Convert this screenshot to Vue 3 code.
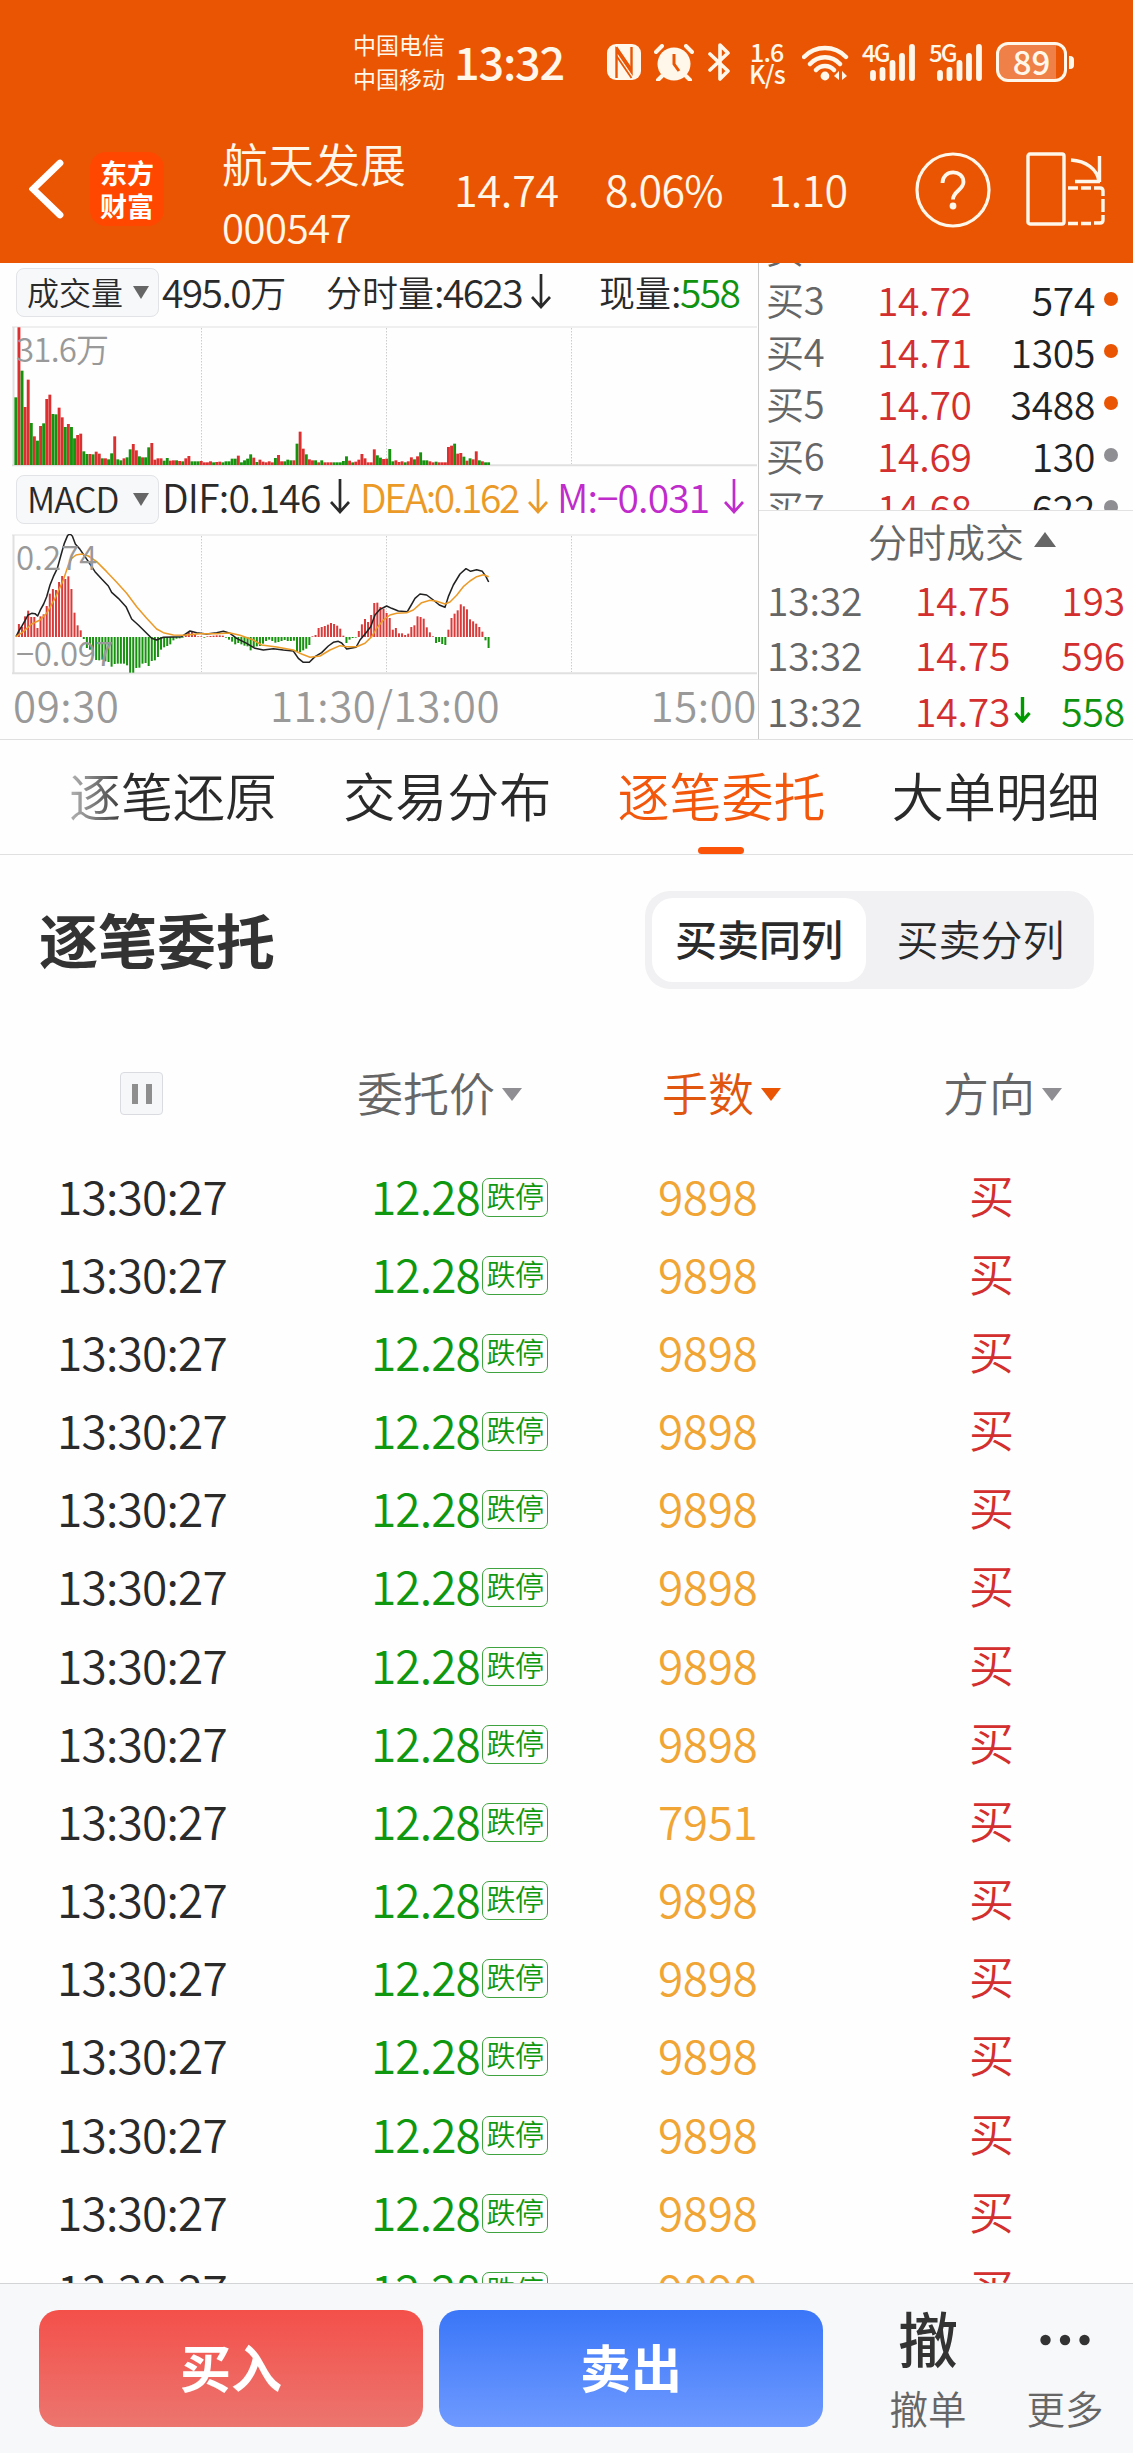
<template>
  <div class="page">
    <header class="top">
      <div class="status">
        <div class="carriers">
          <div>中国电信</div>
          <div>中国移动</div>
        </div>
        <div class="clock">13:32</div>
        <svg class="s-nfc" width="34" height="36" viewBox="0 0 34 36">
          <rect width="34" height="36" rx="9" fill="#fff8ea" />
          <path d="M9.500 34V6l15 22V3" fill="none" stroke="#ea5504" stroke-width="2.400" />
          <path d="M9.500 3l15 22M9.500 12l15 22" fill="none" stroke="#ea5504" stroke-width="1.800" />
        </svg>
        <svg class="s-alarm" width="40" height="37" viewBox="0 0 40 37">
          <circle cx="20" cy="20" r="16.5" fill="#fff8ea" />
          <path d="M2 8l6-6M38 8l-6-6M8 32l-4 4M32 32l4 4" stroke="#fff8ea" stroke-width="4" stroke-linecap="round" />
          <path d="M20 10v10l5 7" fill="none" stroke="#ea5504" stroke-width="3" />
        </svg>
        <svg class="s-bt" width="24" height="38" viewBox="0 0 24 38">
          <path d="M2 11l18 17-8 8V2l8 8L2 27" fill="none" stroke="#fff8ea" stroke-width="3.6" stroke-linejoin="round" stroke-linecap="round" />
        </svg>
        <div class="speed">
          <div>1.6</div>
          <div>K/s</div>
        </div>
        <svg class="s-wifi" width="48" height="37" viewBox="0 0 48 37">
          <path d="M2 13a29 29 0 0 1 42 0M8 20a20 20 0 0 1 30 0M14 26a12 12 0 0 1 18 0" fill="none" stroke="#fff8ea" stroke-width="4.4" stroke-linecap="round" />
          <circle cx="23" cy="32" r="4.4" fill="#fff8ea" />
          <path d="M37 27v9l-5-4zM40 27v9l5-4z" fill="#fff8ea" />
        </svg>
        <div v-for="net in ['4G', '5G']" :key="net" class="signal">
          <span>{{ net }}</span>
          <svg width="48" height="37" viewBox="0 0 48 37">
            <path d="M4 29v5M13.5 26v8M23.5 19v15M33 12v22M43 3v31" stroke="#fff8ea" stroke-width="5.8" stroke-linecap="round" />
          </svg>
        </div>
        <div class="battery"><span>89</span></div>
        <i class="nub"></i>
      </div>

      <div class="titlebar">
        <svg class="back" width="36" height="60" viewBox="0 0 36 60">
          <path d="M31 4L4 30l27 26" fill="none" stroke="#fff" stroke-width="6.8" stroke-linecap="round" />
        </svg>
        <div class="logo"><div>东方</div><div>财富</div></div>
        <div class="stock">
          <div class="name">航天发展</div>
          <div class="code">000547</div>
        </div>
        <div class="quote q1">14.74</div>
        <div class="quote q2">8.06%</div>
        <div class="quote q3">1.10</div>
        <svg class="help" width="76" height="76" viewBox="0 0 76 76" fill="none" stroke="#fff8ea">
          <circle cx="38" cy="38" r="36" stroke-width="3.2" />
          <path d="M27.500 31c0-14 21-14 21-1 0 8-10.500 9-10.500 17.500" stroke-width="3.800" />
          <circle cx="38" cy="54" r="3.400" fill="#fff8ea" stroke="none" />
        </svg>
        <svg class="rotate" width="80" height="74" viewBox="0 0 80 74" fill="none" stroke="#fff8ea" stroke-width="3.400">
          <rect x="2" y="2" width="36" height="70" rx="2" />
          <path d="M45 8c15 1 26 9 28 21M73.500 4v26M49 29.500h25" />
          <path d="M42 36h10M55 36h10M68 36h6q3 0 3 3v5M77 47v13M77 63v5q0 3-3 3h-6M65 71.500H55M52 71.500H42" />
        </svg>
      </div>
    </header>

    <section class="market">
      <div class="charts">
        <div class="ind">
          <div class="chip">成交量<i class="tri"></i></div>
          <div class="cell v1"><b>495.0</b>万</div>
          <div class="cell v2">分时量<b>:4623</b><Arrow /></div>
          <div class="cell v3">现量<b>:<em class="green">558</em></b></div>
        </div>
        <div class="plot">
          <svg width="747" height="141" viewBox="0 0 747 141">
            <path class="frame" d="M1.500 1v139" stroke-width="2" />
            <path class="frame" d="M0 1h745" stroke-width="1" />
            <path class="frame" d="M0 139.300h745" stroke-width="2" />
            <path class="dots" d="M189.500 2v136M374.500 2v136M559.500 2v136" />
            <rect
              v-for="(b, i) in volume"
              :key="i"
              :x="2.4 + i * 3.09"
              :y="139 - b.h"
              width="2.900"
              :height="b.h"
              :fill="b.up ? '#dc2f2f' : '#17920f'"
            />
          </svg>
          <span class="label vol">31.6<small>万</small></span>
        </div>
        <div class="ind macd">
          <div class="chip">MACD<i class="tri"></i></div>
          <div class="cell m1"><b>DIF:0.146</b><Arrow /></div>
          <div class="cell m2"><b>DEA:0.162</b><Arrow /></div>
          <div class="cell m3"><b>M:−0.031</b><Arrow /></div>
        </div>
        <div class="plot">
          <svg width="747" height="141" viewBox="0 0 747 141">
            <path class="frame" d="M1.500 1v139" stroke-width="2" />
            <path class="frame" d="M0 1h745" stroke-width="1" />
            <path class="frame" d="M0 139.300h745" stroke-width="2" />
            <path class="dots" d="M189.500 2v136M374.500 2v136M559.500 2v136" />
            <rect
              v-for="(v, i) in macd"
              :key="i"
              :x="5.9 + i * 3.09"
              :y="v > 0 ? 103 - v / 3 : 103"
              width="2"
              :height="Math.abs(v) / 3"
              :fill="v > 0 ? '#d93a3a' : '#17920f'"
            />
            <g transform="scale(.33333) translate(-36 -102)" fill="none" stroke-width="4.600" stroke-linejoin="round">
              <polyline :points="dif" stroke="#222" />
              <polyline :points="dea" stroke="#eb9a28" />
            </g>
          </svg>
          <span class="label">0.274</span>
          <span class="label low">−0.097</span>
        </div>
        <div class="axis">
          <span>09:30</span><span>11:30/13:00</span><span>15:00</span>
        </div>
      </div>

      <div class="side">
        <div class="bids">
          <div v-for="b in bids" :key="b.level" class="bid">
            <span class="lv">买<b>{{ b.level }}</b></span>
            <span class="red">{{ b.price }}</span>
            <span class="qty">{{ b.qty }}</span>
            <i class="dot" :class="{ gray: !b.hot }"></i>
          </div>
        </div>
        <div class="ticks">
          <div class="ticks-title">分时成交<i class="tri-up"></i></div>
          <div v-for="(t, i) in ticks" :key="i" class="tick">
            <span>{{ t.time }}</span>
            <span class="red">{{ t.price }}</span>
            <svg width="17" height="27" viewBox="0 0 17 27">
              <path v-if="t.down" d="M8.500 1v23M1.500 17l7 8 7-8" fill="none" stroke="#009a00" stroke-width="3.400" />
            </svg>
            <span class="tq" :class="t.down ? 'green' : 'red'">{{ t.qty }}</span>
          </div>
        </div>
      </div>
    </section>

    <nav class="tabs">
      <div
        v-for="t in tabs"
        :key="t"
        class="tab"
        :class="{ active: t === activeTab }"
        @click="activeTab = t"
      >
        {{ t }}
      </div>
    </nav>

    <main class="orders">
      <div class="orders-head">
        <h2>逐笔委托</h2>
        <div class="segment">
          <div
            v-for="m in modes"
            :key="m"
            :class="{ on: m === mode }"
            @click="mode = m"
          >{{ m }}</div>
        </div>
      </div>

      <div class="row cols">
        <span><i class="pause"></i></span>
        <span>委托价<i class="tri"></i></span>
        <span class="sorted">手数<i class="tri"></i></span>
        <span>方向<i class="tri"></i></span>
      </div>
      <div v-for="(lots, i) in orders" :key="i" class="row">
        <span class="time">13:30:27</span>
        <span class="price">12.28<i class="tag">跌停</i></span>
        <span class="lots">{{ lots }}</span>
        <span class="dir">买</span>
      </div>
    </main>

    <footer class="actions">
      <button class="buy">买入</button>
      <button class="sell">卖出</button>
      <div class="act cancel">
        <strong>撤</strong>
        <span>撤单</span>
      </div>
      <div class="act more">
        <svg width="50" height="58" viewBox="0 0 50 58" fill="#333">
          <circle cx="5.500" cy="29" r="5.200" />
          <circle cx="25" cy="29" r="5.200" />
          <circle cx="44.500" cy="29" r="5.200" />
        </svg>
        <span>更多</span>
      </div>
    </footer>
  </div>
</template>

<script setup>
import { ref, h } from 'vue';

// 向下箭头，颜色跟随文字
const Arrow = () =>
  h('svg', { class: 'arrow', width: 20, height: 35, viewBox: '0 0 20 35' }, [
    h('path', { d: 'M10 0v33M1 23l9 10 9-10', fill: 'none', stroke: 'currentColor', 'stroke-width': 2.7 })
  ]);

// 成交量柱：高度 + 颜色 (r 涨 / g 跌)
const volumeText =
  'g203 r413 g283 r174 r256 g126 r86 g73 r117 g125 r198 r211 g153 g152 r172 r143 g114 r123 g114 g80 ' +
  'r90 r94 g41 g33 r33 g32 r40 r34 g20 r20 g17 g35 r86 g17 g14 r20 g23 g47 r63 r44 ' +
  'g26 r23 g23 g53 r66 r16 r20 r20 g13 g21 r13 r14 g14 r12 g11 r20 r27 g11 g11 g11 ' +
  'r12 r8 r8 r11 g8 r9 r10 g8 g11 g11 g19 g19 r28 g8 g14 g19 g32 r22 g9 r16 ' +
  'r10 r8 r11 r8 g21 r30 r11 g11 g16 g14 r14 g64 r100 r49 g32 r17 r14 g14 r8 g14 ' +
  'r8 r8 r8 g8 g8 g8 g12 g26 r13 g8 r10 r16 r33 r20 r8 r8 r47 g29 g22 r18 ' +
  'r19 g48 g11 r14 r9 r11 g8 r11 r23 g17 r26 g38 g14 g14 r11 r8 g10 r8 r8 r8 ' +
  'r54 r58 g64 r34 r36 g25 r13 g20 r17 r41 g14 r11 g8 g8';
const volume = volumeText.split(' ').map(s => ({ up: s[0] === 'r', h: Number(s.slice(1)) / 3 }));

const macd = [
  39, 30, 62, 79, 60, 60, 27, 62, 68, 93, 130, 144, 141, 165, 183, 174, 182, 144, 73, 35, 20,
  -6, -33, -38, -57, -69, -70, -68, -73, -75, -89, -81, -80, -80, -80, -85, -107, -107, -93, -92,
  -80, -78, -87, -72, -70, -60, -38, -31, -27, -22, -10, -5, -4, -2, 6, 14, 15, 8, 2, 2, -2, 2, 3,
  4, 5, 5, 4, -2, -8, -14, -22, -18, -22, -26, -28, -40, -30, -28, -27, -20, -12, -8, -12, -17,
  -15, -12, -9, -12, -12, -11, -45, -45, -40, -35, -24, 2, 6, 27, 30, 33, 37, 42, 39, 34, 25, 4,
  -18, -8, -3, -2, 18, 38, 54, 45, 66, 102, 103, 90, 85, 72, 57, 22, 27, 11, 11, 6, 10, 30, 35,
  62, 60, 55, 29, 14, 2, -18, -15, -21, -24, 22, 57, 70, 80, 98, 92, 83, 53, 47, 40, 30, 16, -10, -33
];

const dif =
  '48,410 57,392 66,378 75,362 84,345 95,340 105,341 113,348 122,328 131,312 140,290 150,255 160,230 ' +
  '172,205 183,165 193,130 203,106 210,102 217,108 226,132 240,148 255,170 270,192 285,215 305,237 ' +
  '325,258 335,277 355,295 378,320 395,357 415,375 440,400 455,415 470,420 490,412 520,411 545,410 ' +
  '570,393 590,398 620,402 650,398 670,394 690,400 710,415 740,430 765,445 790,450 820,446 850,450 ' +
  '880,453 895,475 910,487 928,487 945,470 965,458 985,438 1000,427 1015,424 1025,429 1040,447 ' +
  '1068,442 1080,420 1100,396 1112,380 1125,345 1140,328 1160,318 1175,325 1195,333 1222,335 ' +
  '1232,318 1245,295 1260,282 1280,285 1300,300 1318,315 1335,322 1345,290 1360,255 1380,222 ' +
  '1398,206 1412,214 1430,209 1447,214 1458,230 1466,246';
const dea =
  '48,410 70,395 95,372 120,360 140,340 165,295 190,240 205,195 215,175 228,165 245,162 265,168 ' +
  '290,185 320,215 350,247 380,280 410,320 440,355 470,387 490,398 520,405 550,406 600,401 650,401 ' +
  '690,399 720,406 760,420 785,435 830,441 880,450 905,462 930,472 960,468 990,450 1020,437 ' +
  '1040,440 1070,440 1095,430 1115,410 1130,385 1150,360 1170,345 1190,340 1220,338 1240,330 ' +
  '1265,308 1290,301 1310,304 1335,312 1350,306 1370,286 1390,260 1410,243 1430,230 1450,224 1466,230';

const bids = [
  { level: 2, price: '', qty: '', hot: false },
  { level: 3, price: '14.72', qty: 574, hot: true },
  { level: 4, price: '14.71', qty: 1305, hot: true },
  { level: 5, price: '14.70', qty: 3488, hot: true },
  { level: 6, price: '14.69', qty: 130, hot: false },
  { level: 7, price: '14.68', qty: 622, hot: false }
];

const ticks = [
  { time: '13:32', price: '14.75', qty: 193 },
  { time: '13:32', price: '14.75', qty: 596 },
  { time: '13:32', price: '14.73', qty: 558, down: true }
];

const tabs = ['逐笔还原', '交易分布', '逐笔委托', '大单明细'];
const activeTab = ref('逐笔委托');

const modes = ['买卖同列', '买卖分列'];
const mode = ref('买卖同列');

const orders = Array.from({ length: 15 }, (_, i) => (i === 8 ? 7951 : 9898));
</script>

<style>
body {
  background: #fff;
}
</style>

<style scoped>
.page {
  width: 1133px;
  height: 2453px;
  overflow: hidden;
  display: flex;
  flex-direction: column;
  font-family: "Noto Sans CJK SC", sans-serif;
  font-weight: 350;
  color: #2a2a2a;
  background: #fefefe;
}
.page * { box-sizing: border-box; }
svg { display: block; flex: none; }
b, em, i, small { font-weight: inherit; font-style: normal; }
.red { color: #d32f2f; }
.green { color: #0f930f; }

/* 顶部 */
.top { height: 263px; flex: none; background: #ea5504; color: #fff8ea; }
.status { display: flex; align-items: center; height: 124px; padding-left: 353px; white-space: nowrap; }
.carriers { width: 101px; font-size: 23px; line-height: 34px; margin-top: -2px; font-weight: 400; }
.clock { width: 153px; font-size: 45px; line-height: 50px; letter-spacing: -1.2px; font-weight: 500; margin-top: -3px; }
.s-alarm { margin-left: 13px; }
.s-bt { margin-left: 14px; }
.speed { width: 52px; margin-left: 17px; font-size: 25px; line-height: 22px; letter-spacing: -.8px; font-weight: 500; margin-top: -1px; }
.speed div:first-child { padding-left: 1px; }
.s-wifi { margin-left: 1px; }
.signal { position: relative; width: 67px; padding-left: 19px; }
.signal span { position: absolute; left: 12px; top: -8px; font-size: 24px; line-height: 32px; letter-spacing: -2px; font-weight: 500; }
.battery {
  width: 71px; height: 40px; margin-left: 12px; border: 3px solid #fff8ea; border-radius: 12px;
  background: linear-gradient(90deg, #ef8048 88%, #ea5504 88%);
  display: flex; align-items: center; justify-content: center;
  font-size: 33px; line-height: 34px; font-weight: 500;
}
.battery span { margin-top: -3px; }
.nub { width: 5px; height: 13px; margin-left: 2px; border-radius: 0 4px 4px 0; background: #fff8ea; }

.titlebar { display: flex; align-items: flex-start; height: 139px; white-space: nowrap; }
.back { margin: 35px 0 0 29px; }
.logo {
  width: 74px; height: 74px; margin: 28px 0 0 25px; padding-top: 4px; border-radius: 16px; background: #ff4700;
  text-align: center; color: #fff; font-size: 27px; font-weight: 700; line-height: 33px;
}
.stock { width: 232px; margin: 11px 0 0 58px; }
.name { font-size: 46px; line-height: 54px; }
.code { font-size: 40px; line-height: 46px; letter-spacing: -.4px; margin-top: 14px; }
.quote { font-size: 43px; line-height: 60px; margin-top: 34px; letter-spacing: -.2px; }
.q1 { width: 151px; }
.q2 { width: 163px; letter-spacing: -.8px; }
.q3 { width: 147px; letter-spacing: -.8px; }
.help { margin-top: 28px; }
.rotate { margin: 28px 0 0 35px; }

/* 行情图 */
.market { display: flex; height: 477px; flex: none; border-bottom: 1.500px solid #dfdfdf; }
.charts { width: 759px; border-right: 1px solid #c9c9c9; padding-top: 5px; }
.ind { display: flex; height: 58px; padding-left: 16px; white-space: nowrap; font-size: 36px; }
.macd { margin-top: 8px; height: 59px; }
.chip {
  width: 143px; height: 49px; flex: none; padding: 0 9px 4px 10px; display: flex; align-items: center; justify-content: space-between;
  background: #f7f8fa; border: 1px solid #e2e3e6; border-radius: 8px; font-size: 32px; line-height: 38px;
}
.tri { display: inline-block; border: 8px solid transparent; border-top: 13px solid #666; border-bottom: 0; }
.chip .tri { margin-top: 4px; }
.macd .chip { font-size: 35px; letter-spacing: -.8px; }
.cell { display: flex; align-items: center; height: 46px; flex: none; }
.macd .cell { height: 43px; }
.cell b { font-size: 39px; letter-spacing: -1.600px; margin-top: -1px; }
.macd .m1 b { letter-spacing: -.800px; }
.macd .m2 b { letter-spacing: -2.400px; }
.macd .m3 b { letter-spacing: -.900px; }
.arrow { margin-left: 9px; }
.m1 .arrow { margin-left: 9px; }
.m2 .arrow { margin-left: 10px; }
.m3 .arrow { margin-left: 15px; }
.v1 { width: 167px; padding-left: 3px; }
.v2 { width: 273px; }
.m1 { width: 201px; padding-left: 3px; }
.m2 { width: 197px; color: #eb9a28; }
.m3 { color: #c02bcb; }
.plot { position: relative; height: 141px; padding-left: 12px; }
.frame { stroke: #e0e0e0; fill: none; }
.dots { stroke: #ccc; stroke-width: 1; stroke-dasharray: 1.500 1.500; fill: none; }
.label { position: absolute; left: 16px; top: 5px; font-size: 33px; line-height: 34px; color: #999; }
.label small { font-size: 33px; }
.vol { letter-spacing: -.8px; }
.low { top: 101px; letter-spacing: -.4px; }
.axis { display: flex; justify-content: space-between; padding: 4px 1px 0 13px; font-size: 42px; line-height: 50px; letter-spacing: .6px; color: #999; }

.side { flex: 1; min-width: 0; color: #666; font-size: 39px; white-space: nowrap; }
.bids { height: 248px; overflow: hidden; border-bottom: 1px solid #e2e2e2; }
.bid { display: flex; align-items: center; height: 52px; padding-left: 7px; letter-spacing: -.3px; }
.bid:first-child { margin-top: -40px; }
.bid span { line-height: 52px; margin-top: -4px; }
.bid .lv { width: 111px; font-size: 38px; }
.lv b { font-size: 38px; }
.qty { margin-left: auto; color: #222; }
.dot { width: 14px; height: 14px; margin: -4px 15px 0 9px; border-radius: 50%; background: #ea5504; }
.gray { background: #8e8e93; }
.ticks-title { display: flex; align-items: center; height: 60px; padding-left: 109px; font-size: 39px; line-height: 58px; padding-bottom: 2px; }
.tri-up { border: 11.500px solid transparent; border-bottom: 15px solid #666; border-top: 0; margin: -2px 0 0 10px; }
.tick { display: flex; align-items: center; height: 55.600px; padding: 0 8px 0 8px; letter-spacing: -.2px; }
.tick span { margin-top: 0; }
.tick .red:nth-child(2) { width: 99px; margin-left: auto; }
.tick .tq { width: 94px; text-align: right; }

/* 标签栏 */
.tabs { display: flex; height: 115px; flex: none; padding-left: 36px; border-bottom: 1px solid #e0e0e0; }
.tab { position: relative; width: 274.200px; text-align: center; font-size: 52px; line-height: 110px; white-space: nowrap; flex: none; }
.tab:first-child { color: transparent; background: linear-gradient(90deg, #aaa 14%, #2a2a2a 34%); background-clip: text; -webkit-background-clip: text; }
.active { color: #f3570c; }
.active::after { content: ""; position: absolute; left: 50%; bottom: 0; width: 46px; height: 7px; margin-left: -23px; border-radius: 4px; background: #fb5408; }

/* 委托列表 */
.orders { height: 1428px; flex: none; overflow: hidden; }
.orders-head { display: flex; justify-content: space-between; align-items: center; height: 98px; margin: 36px 39px 0 39px; }
h2 { margin: -2px 0 0; font-size: 59px; line-height: 80px; font-weight: 700; color: #333; }
.segment { display: flex; width: 449px; height: 98px; padding: 7px; border-radius: 25px; background: #f1f1f3; font-size: 42px; line-height: 80px; text-align: center; }
.segment div { width: 214px; height: 84px; border-radius: 21px; flex: none; }
.segment div + div { width: 221px; padding-left: 8px; }
.segment .on { background: #fff; font-weight: 500; }
.row { display: grid; grid-template-columns: 314px 287px 311px 1fr; align-items: center; height: 78.180px; padding-left: 57px; font-size: 46px; line-height: 72px; padding-bottom: 5px; white-space: nowrap; }
.cols { height: 90px; margin: 60px 0 19px; color: #666; font-size: 46px; padding-bottom: 6px; }
.cols .tri { border-width: 13px 10px 0; border-top-color: #8e8e93; margin-left: 7px; vertical-align: 10px; }
.cols span:nth-child(2) { margin-left: -14px; }
.cols span:nth-child(3) { margin-left: 4px; }
.cols span:nth-child(4) { margin-left: -26px; }
.sorted { color: #e0560f; }
.cols .sorted .tri { border-top-color: #ea5504; }
.pause {
  display: block; width: 43px; height: 43px; margin: 5px 0 0 63px; border: 1px solid #d9dbe0; border-radius: 4px;
  background: linear-gradient(#8e8e8e, #8e8e8e) 11px 50% / 6px 20px no-repeat, linear-gradient(#8e8e8e, #8e8e8e) 25px 50% / 6px 20px no-repeat, #f6f7f9;
}
.time { letter-spacing: -.8px; }
.price { display: flex; align-items: center; color: #0f980f; letter-spacing: -.9px; }
.tag { width: 66px; height: 39px; margin: 5px 0 0 2px; border: 1.500px solid #3fa33f; border-radius: 7px; font-size: 29px; line-height: 33px; text-align: center; letter-spacing: -.5px; }
.lots { color: #f0a535; letter-spacing: -.4px; }
.dir { color: #d32f2f; font-size: 45px; }

/* 底部操作 */
.actions { display: flex; height: 170px; flex: none; border-top: 1px solid #d3d4d6; background: #f7f8fa; padding: 26px 0 0 39px; }
.actions button { width: 384px; height: 117px; margin-right: 16px; border: 0; border-radius: 20px; padding: 0 0 5px; color: #fff; font: 700 51px "Noto Sans CJK SC", sans-serif; }
.buy { background: linear-gradient(#f4504a, #ec756f); }
.sell { background: linear-gradient(#3a76f8, #6f9aff); }
.act { display: flex; flex-direction: column; align-items: center; color: #666; font-size: 38.500px; line-height: 50px; }
.cancel { width: 76px; margin-left: 51px; }
.act strong { font-size: 60px; line-height: 58px; height: 58px; margin-top: -2px; font-weight: 500; color: #333; }
.act span { margin-top: 16px; white-space: nowrap; }
.more { width: 76px; margin-left: 61px; }
.more svg { margin-top: 1px; }
.more span { margin-top: 13px; }
</style>
